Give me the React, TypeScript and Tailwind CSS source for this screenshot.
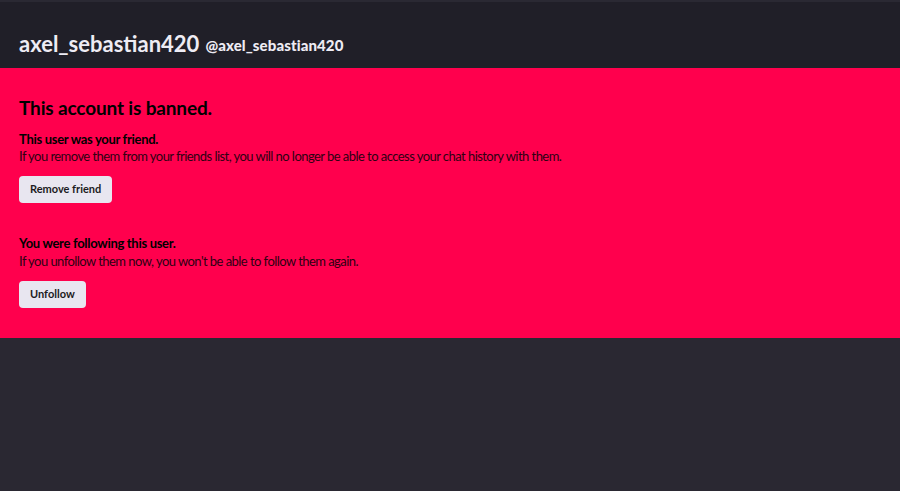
import { useState } from 'react';

const App = () => {
  const [isFriend, setIsFriend] = useState(true);
  const [isFollowing, setIsFollowing] = useState(true);

  return (
    <div className="min-h-screen bg-[#2a2832] font-['Lato',sans-serif]">
      {/* Header */}
      <div className="h-[68px] bg-[#201f28] border-t-2 border-[#2a2933] flex items-end px-[19px] pb-[13px]">
        <h1 className="text-[22px] font-bold text-[#eeecf4] leading-none">axel_sebastian420</h1>
        <span className="ml-[6px] text-[15px] font-black text-[#eeecf4] leading-none mb-[2px] tracking-[0.1px]">
          @axel_sebastian420
        </span>
      </div>

      {/* Banned notice */}
      <div className="bg-[#ff004d] h-[270px] px-[19px] pt-[28px] text-black">
        <h2 className="text-[19px] font-bold leading-[24px] tracking-[-0.15px]">This account is banned.</h2>

        <div className="mt-[10px]">
          <p className="text-[13px] font-bold leading-[18px] tracking-[-0.3px]">This user was your friend.</p>
          <p className="text-[13px] leading-[17px] tracking-[-0.55px] text-[#2e0012]">
            If you remove them from your friends list, you will no longer be able to access your chat history with them.
          </p>
          <button
            type="button"
            onClick={() => setIsFriend(!isFriend)}
            className="mt-[11px] h-[27px] px-[11px] rounded-[4px] bg-[#e8e6f0] text-[11px] font-bold text-[#1c1b22]"
          >
            Remove friend
          </button>
        </div>

        <div className="mt-[31px]">
          <p className="text-[13px] font-bold leading-[18px] tracking-[-0.3px]">You were following this user.</p>
          <p className="text-[13px] leading-[18px] tracking-[-0.55px] text-[#2e0012]">
            If you unfollow them now, you won't be able to follow them again.
          </p>
          <button
            type="button"
            onClick={() => setIsFollowing(!isFollowing)}
            className="mt-[11px] h-[27px] px-[11px] rounded-[4px] bg-[#e8e6f0] text-[11px] font-bold text-[#1c1b22]"
          >
            Unfollow
          </button>
        </div>
      </div>
    </div>
  );
};

export default App;
